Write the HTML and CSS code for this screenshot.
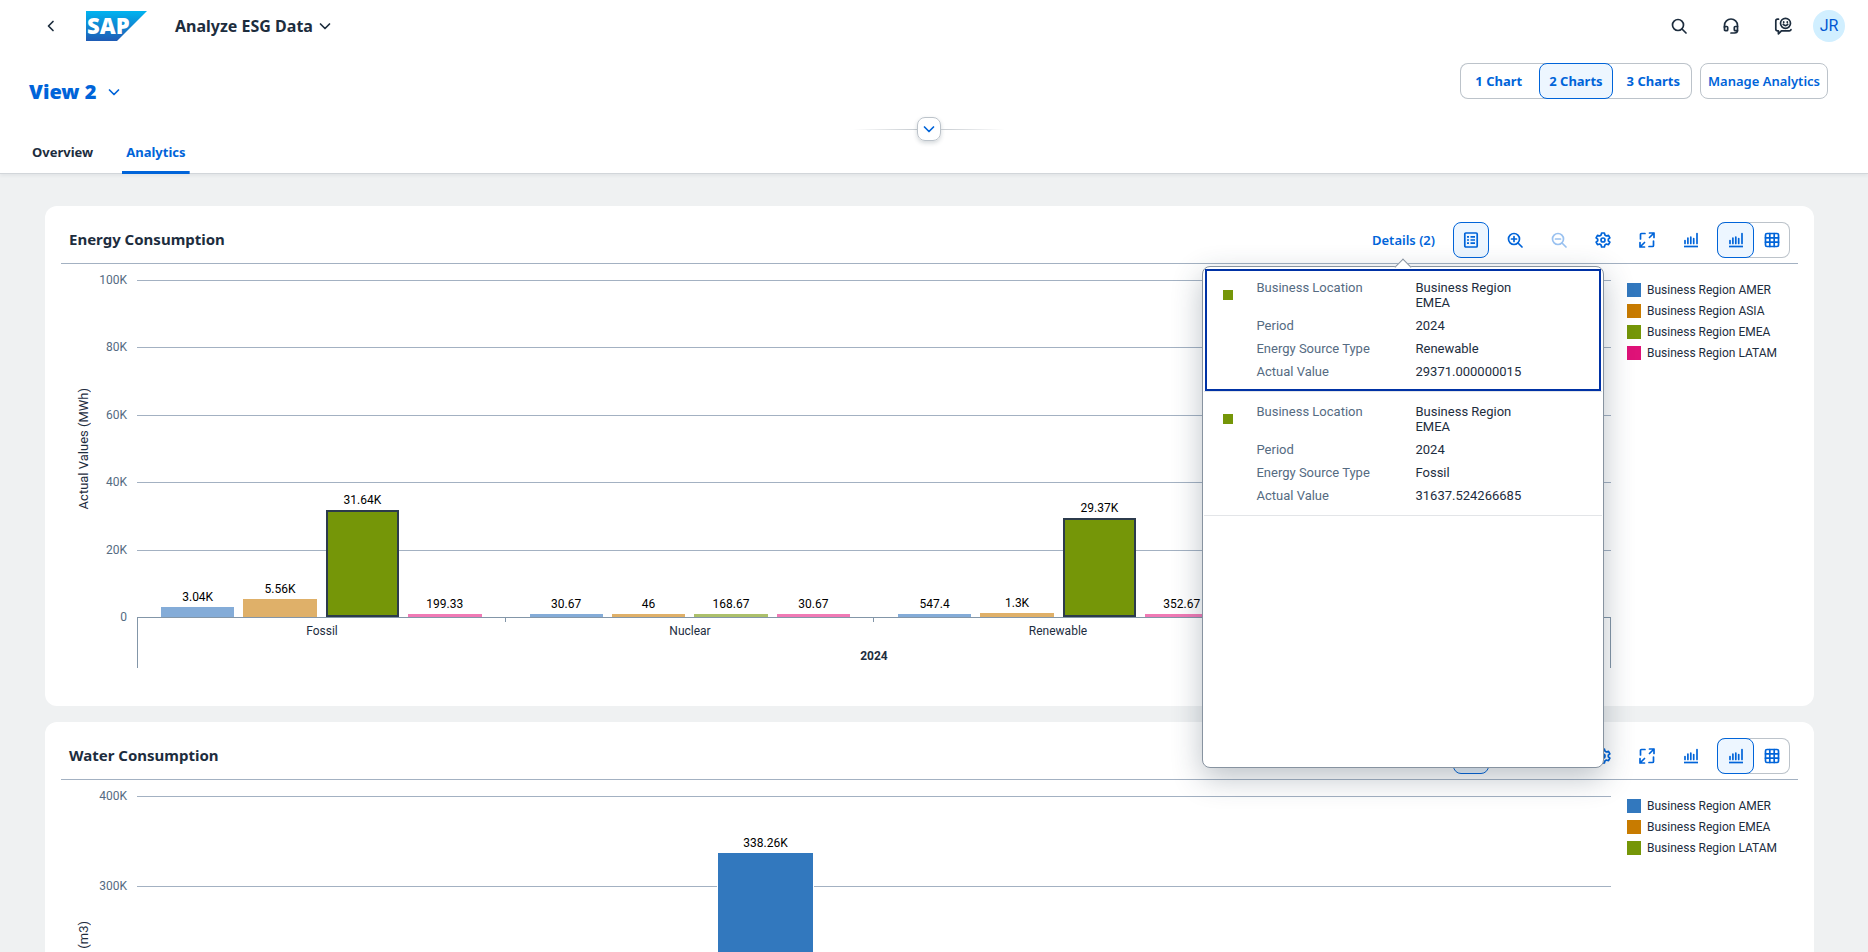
FILE: index.html
```html
<!DOCTYPE html>
<html lang="en">
<head>
<meta charset="utf-8">
<title>Analyze ESG Data</title>
<link rel="stylesheet" href="styles.css">
</head>
<body>
<svg class="sprite" aria-hidden="true">
  <symbol id="i-down" viewBox="0 0 16 16"><path d="M3.5 6l4.5 4.500L12.500 6" /></symbol>
  <symbol id="i-back" viewBox="0 0 16 16"><path d="M10 3.500L5.500 8l4.500 4.500" /></symbol>
  <symbol id="i-search" viewBox="0 0 16 16"><circle cx="7" cy="7" r="5.500"/><path d="M11 11l4 4"/></symbol>
  <symbol id="i-headset" viewBox="0 0 16 16"><path d="M1.500 9.500V7.500a6.500 6.500 0 0 1 13 0v4.500q0 3-3 3H8"/><path d="M1.500 8.500h2.200q1 0 1 1v2.200q0 1-1 1H2.500q-1 0-1-1zM14.500 8.500h-2.200q-1 0-1 1v2.200q0 1 1 1h2.200"/></symbol>
  <symbol id="i-feedback" viewBox="0 0 18 18"><circle cx="11.500" cy="6.300" r="5"/><path d="M9.300 7.400q2.200 2.400 4.400 0M9.700 4.800v.6M13.300 4.800v.6M4.500 2.200H3.500Q1.800 2.200 1.800 4v8q0 1.800 1.800 1.800h.8v3l3-3h8q1.600 0 1.600-1.300"/></symbol>
  <symbol id="i-details" viewBox="0 0 16 16"><rect x="1.800" y="1" width="12.400" height="14" rx="1"/><path class="butt" d="M4 4.800h2M4 8h2M4 11.200h2M7.500 4.800h4.500M7.500 8h4.500M7.500 11.200h4.500"/></symbol>
  <symbol id="i-zoomin" viewBox="0 0 16 16"><circle cx="7" cy="7" r="5.500"/><path d="M11 11l4 4M4.500 7h5M7 4.500v5"/></symbol>
  <symbol id="i-zoomout" viewBox="0 0 16 16"><circle cx="7" cy="7" r="5.500"/><path d="M11 11l4 4M4.500 7h5"/></symbol>
  <symbol id="i-gear" viewBox="0 0 16 16"><path d="M6.600 1h2.800l.5 2.100 1.500.9 2.100-.7 1.400 2.500L13.300 7.200v1.600l1.600 1.400-1.400 2.500-2.100-.7-1.500.9-.5 2.100H6.600l-.5-2.100-1.500-.9-2.100.7-1.400-2.500 1.600-1.400V7.200L1.100 5.800l1.400-2.500 2.100.7 1.500-.9z"/><circle cx="8" cy="8" r="2"/></symbol>
  <symbol id="i-full" viewBox="0 0 16 16"><path d="M6 1.500H2.500Q1.500 1.500 1.500 2.500V7M10 14.500h3.500q1 0 1-1V9M10.500 1H15v4.500M15 1l-4.500 4.500M5.500 15H1v-4.500M1 15l4.500-4.500"/></symbol>
  <symbol id="i-chart" viewBox="0 0 16 16"><path class="butt" d="M1 14.500h14"/><path d="M2 11.500V8.500M4.900 11.500V6M7.800 11.500V5M10.700 11.500V6.500M14 11.500V1.500"/></symbol>
  <symbol id="i-table" viewBox="0 0 16 16"><rect x="1.500" y="1.500" width="13" height="13" rx="1.500"/><path d="M1.500 5.800h13M1.500 10.200h13M5.800 1.500v13M10.200 1.500v13"/></symbol>
</svg>

<header class="shell">
  <button class="icon-btn shell-btn back" aria-label="Back"><svg class="icon"><use href="#i-back"/></svg></button>
  <svg class="logo" viewBox="0 0 61 30" role="img" aria-label="SAP">
    <defs><linearGradient id="sap" x1="0" y1="0" x2="0" y2="1"><stop offset="0" stop-color="#00b4f0"/><stop offset="1" stop-color="#1f5bb5"/></linearGradient></defs>
    <path fill="url(#sap)" d="M0 0h61L31 30H0z"/>
    <text class="logo-text" x="1" y="23">SAP</text>
  </svg>
  <button class="app-title">Analyze ESG Data <svg class="icon"><use href="#i-down"/></svg></button>
  <div class="shell-actions">
    <button class="icon-btn shell-btn" aria-label="Search"><svg class="icon"><use href="#i-search"/></svg></button>
    <button class="icon-btn shell-btn" aria-label="Support"><svg class="icon"><use href="#i-headset"/></svg></button>
    <button class="icon-btn shell-btn" aria-label="Feedback"><svg class="icon wide"><use href="#i-feedback"/></svg></button>
    <button class="avatar" aria-label="Profile JR">JR</button>
  </div>
</header>

<section class="page-head">
  <div class="view-row">
    <button class="view">View 2 <svg class="icon"><use href="#i-down"/></svg></button>
    <div class="view-actions">
      <div class="segmented">
        <button>1 Chart</button><button class="on" aria-pressed="true">2 Charts</button><button>3 Charts</button>
      </div>
      <button class="manage">Manage Analytics</button>
    </div>
  </div>
  <div class="expander"><span class="line"></span><button class="expand" aria-label="Expand header"><svg class="icon"><use href="#i-down"/></svg></button><span class="line end"></span></div>
  <nav class="tabs"><a href="#overview">Overview</a><a class="current" href="#analytics" aria-current="page">Analytics</a></nav>
</section>

<main class="content">
  <article class="card">
    <header class="card-head">
      <h2>Energy Consumption</h2>
      <div class="toolbar">
        <div class="details">
          <button class="details-btn" aria-expanded="true">Details (2)</button>
          <div class="popover" role="dialog" aria-label="Details">
            <ul class="items">
              <li class="item focused"><span class="dot"></span>
                <dl><dt>Business Location</dt><dd>Business Region EMEA</dd><dt>Period</dt><dd>2024</dd><dt>Energy Source Type</dt><dd>Renewable</dd><dt>Actual Value</dt><dd>29371.000000015</dd></dl></li>
              <li class="item"><span class="dot"></span>
                <dl><dt>Business Location</dt><dd>Business Region EMEA</dd><dt>Period</dt><dd>2024</dd><dt>Energy Source Type</dt><dd>Fossil</dd><dt>Actual Value</dt><dd>31637.524266685</dd></dl></li>
            </ul>
          </div>
        </div>
        <button class="icon-btn on" aria-label="Legend"><svg class="icon"><use href="#i-details"/></svg></button>
        <button class="icon-btn" aria-label="Zoom in"><svg class="icon"><use href="#i-zoomin"/></svg></button>
        <button class="icon-btn" aria-label="Zoom out" disabled><svg class="icon"><use href="#i-zoomout"/></svg></button>
        <button class="icon-btn" aria-label="Settings"><svg class="icon"><use href="#i-gear"/></svg></button>
        <button class="icon-btn" aria-label="Full screen"><svg class="icon"><use href="#i-full"/></svg></button>
        <button class="icon-btn" aria-label="Chart type"><svg class="icon"><use href="#i-chart"/></svg></button>
        <div class="segmented icons"><button class="on" aria-label="Chart view"><svg class="icon"><use href="#i-chart"/></svg></button><button aria-label="Table view"><svg class="icon"><use href="#i-table"/></svg></button></div>
      </div>
    </header>
    <div class="chart">
      <div class="axis-title"><span>Actual Values (MWh)</span></div>
      <div class="scale"><span>100K</span><span>80K</span><span>60K</span><span>40K</span><span>20K</span><span>0</span></div>
      <div class="plot">
        <div class="grid"><i></i><i></i><i></i><i></i><i></i></div>
        <div class="groups">
          <div class="group">
            <div class="col"><span>3.04K</span><b class="bar blue" style="height:10px"></b></div>
            <div class="col"><span>5.56K</span><b class="bar orange" style="height:18px"></b></div>
            <div class="col"><span>31.64K</span><b class="bar picked" style="height:107px"></b></div>
            <div class="col"><span>199.33</span><b class="bar pink" style="height:3px"></b></div>
          </div>
          <div class="group">
            <div class="col"><span>30.67</span><b class="bar blue" style="height:3px"></b></div>
            <div class="col"><span>46</span><b class="bar orange" style="height:3px"></b></div>
            <div class="col"><span>168.67</span><b class="bar green" style="height:3px"></b></div>
            <div class="col"><span>30.67</span><b class="bar pink" style="height:3px"></b></div>
          </div>
          <div class="group">
            <div class="col"><span>547.4</span><b class="bar blue" style="height:3px"></b></div>
            <div class="col"><span>1.3K</span><b class="bar orange" style="height:4px"></b></div>
            <div class="col"><span>29.37K</span><b class="bar picked" style="height:99px"></b></div>
            <div class="col"><span>352.67</span><b class="bar pink" style="height:3px"></b></div>
          </div>
          <div class="group"></div>
        </div>
        <div class="categories">
          <div class="names"><span>Fossil</span><span>Nuclear</span><span>Renewable</span><span></span></div>
          <strong>2024</strong>
        </div>
      </div>
      <ul class="legend"><li><i class="c1"></i>Business Region AMER</li><li><i class="c2"></i>Business Region ASIA</li><li><i class="c3"></i>Business Region EMEA</li><li><i class="c4"></i>Business Region LATAM</li></ul>
    </div>
  </article>

  <article class="card">
    <header class="card-head">
      <h2>Water Consumption</h2>
      <div class="toolbar">
        <button class="icon-btn on" aria-label="Legend"><svg class="icon"><use href="#i-details"/></svg></button>
        <button class="icon-btn" aria-label="Zoom in"><svg class="icon"><use href="#i-zoomin"/></svg></button>
        <button class="icon-btn" aria-label="Zoom out" disabled><svg class="icon"><use href="#i-zoomout"/></svg></button>
        <button class="icon-btn" aria-label="Settings"><svg class="icon"><use href="#i-gear"/></svg></button>
        <button class="icon-btn" aria-label="Full screen"><svg class="icon"><use href="#i-full"/></svg></button>
        <button class="icon-btn" aria-label="Chart type"><svg class="icon"><use href="#i-chart"/></svg></button>
        <div class="segmented icons"><button class="on" aria-label="Chart view"><svg class="icon"><use href="#i-chart"/></svg></button><button aria-label="Table view"><svg class="icon"><use href="#i-table"/></svg></button></div>
      </div>
    </header>
    <div class="chart water">
      <div class="axis-title"><span>Actual Values (m3)</span></div>
      <div class="scale"><span>400K</span><span>300K</span><span>200K</span><span>100K</span><span>0</span></div>
      <div class="plot">
        <div class="grid"><i></i><i></i><i></i><i></i></div>
        <div class="groups single">
          <div class="col"><span>338.26K</span><b class="bar solid" style="height:304px"></b></div>
        </div>
      </div>
      <ul class="legend"><li><i class="c1"></i>Business Region AMER</li><li><i class="c2"></i>Business Region EMEA</li><li><i class="c3"></i>Business Region LATAM</li></ul>
    </div>
  </article>
</main>
</body>
</html>
```
FILE: styles.css
```css
* { box-sizing: border-box; }
body {
  margin: 0;
  height: 100vh;
  display: flex;
  flex-direction: column;
  overflow: hidden;
  background: #eff1f2;
  color: #1d2d3e;
  font: 14px/16px Roboto, "Noto Sans", sans-serif;
}
button { font: inherit; color: inherit; background: none; border: 0; padding: 0; cursor: pointer; }
ul, dl, dd, h2 { margin: 0; padding: 0; list-style: none; }
.sprite { position: absolute; width: 0; height: 0; }
.icon { width: 16px; height: 16px; flex: none; fill: none; stroke: currentColor; stroke-width: 1.7; stroke-linejoin: round; stroke-linecap: round; }
.icon.wide { width: 18px; height: 18px; }
.butt { stroke-linecap: butt; }

.shell { display: flex; align-items: center; height: 52px; padding: 0 23px 1px 33px; background: #fff; }
.shell-btn.icon-btn { color: #1d2d3e; }
.logo { width: 61px; height: 30px; margin: 0 28px 0 17px; }
.logo-text { font: 800 22px "Open Sans", sans-serif; fill: #fff; }
.app-title { display: flex; align-items: center; gap: 4px; font: 700 16px/20px "Noto Sans", sans-serif; }
.shell-actions { display: flex; align-items: center; gap: 16px; margin-left: auto; }
.avatar { width: 32px; height: 32px; margin-left: -4px; border-radius: 50%; background: #d1efff; color: #0057d2; font-size: 16px; }

.icon-btn { display: grid; place-items: center; width: 36px; height: 36px; border: 1px solid transparent; border-radius: 8px; color: #0064d9; }
.icon-btn.on { border-color: #0064d9; background: #edf6ff; }
.icon-btn:disabled { color: #99c1f0; }

.page-head { position: relative; z-index: 1; background: #fff; border-bottom: 1px solid #d2d6da; box-shadow: 0 2px 3px rgba(34, 53, 72, .06); }
.view-row { display: flex; justify-content: space-between; padding: 11px 40px 0 29px; color: #0064d9; }
.view { display: flex; align-items: center; gap: 10px; height: 58px; font: 900 20px/24px "Noto Sans", sans-serif; }
.view-actions { display: flex; align-items: flex-start; gap: 8px; font: 600 13px/16px "Noto Sans", sans-serif; }
.segmented { display: flex; height: 36px; border-radius: 8px; box-shadow: inset 0 0 0 1px #bcc3ca; color: #0064d9; font-weight: 700; }
.segmented button { padding: 0 11px 0 13px; border: 1px solid transparent; border-radius: 8px; }
.segmented .on { padding: 0 9px; border-color: #0064d9; background: #edf6ff; }
.segmented button:first-child { padding: 0 16px 0 14px; }
.segmented.icons button { display: grid; place-items: center; width: 36px; padding: 0; }
.segmented.icons .on { width: 37px; }
.manage { width: 128px; height: 36px; border: 1px solid #bcc3ca; border-radius: 8px; }
.expander { display: flex; align-items: center; justify-content: center; height: 24px; margin: -4px 10px 0 0; }
.line { width: 64px; height: 1px; background: linear-gradient(to right, transparent, #c6cbd0); }
.line.end { background: linear-gradient(to left, transparent, #c6cbd0); }
.expand { display: grid; place-items: center; width: 24px; height: 24px; border: 1px solid #bcc3ca; border-radius: 8px; color: #0064d9; box-shadow: 0 2px 4px rgba(34, 53, 72, .2); }
.tabs { display: flex; gap: 25px; padding: 0 28px; height: 33px; margin-bottom: -1px; }
.tabs a { padding: 3px 4px 0; color: #1d2d3e; font: 700 13px/16px "Noto Sans", sans-serif; text-decoration: none; }
.tabs .current { color: #0064d9; background: linear-gradient(#0064d9, #0064d9) bottom / 100% 3px no-repeat; }

.content { flex: 1; min-height: 0; display: flex; flex-direction: column; gap: 16px; padding: 32px 54px 0 45px; overflow: hidden; }
.card { flex: none; min-height: 500px; padding: 8px 16px 38px; border-radius: 12px; background: #fff; }
.card-head { display: flex; align-items: center; justify-content: space-between; height: 50px; padding: 2px 8px 0; border-bottom: 1px solid #a3b1c2; }
.card-head h2 { padding-bottom: 2px; font: 700 15px/20px "Noto Sans", sans-serif; }
.toolbar { display: flex; align-items: center; gap: 8px; }
.details { position: relative; z-index: 5; }
.details-btn { height: 36px; padding: 0 10px; color: #0064d9; font: 600 13px/16px "Noto Sans", sans-serif; }

.popover { position: absolute; top: 44px; left: 50%; width: 402px; height: 502px; transform: translateX(-50%); padding: 1px; border: 1px solid #8793a0; border-radius: 8px; background: #fff; box-shadow: 0 10px 30px rgba(34, 53, 72, .3); }
.popover::before { content: ""; position: absolute; top: -6px; left: 50%; width: 11px; height: 11px; transform: translateX(-50%) rotate(45deg); border: solid #8793a0; border-width: 1px 0 0 1px; background: #fff; }
.items { position: relative; }
.item { display: flex; padding: 12px 18px 12px 19px; border-bottom: 1px solid #e3e5e8; font-size: 13px; line-height: 15px; }
.item.focused { outline: 2px solid #0032a5; outline-offset: -3px; }
.dot { flex: none; width: 10px; height: 10px; margin: 10px 23px 0 0; background: #759608; }
.item dl { display: grid; grid-template-columns: 159px 110px; row-gap: 8px; }
.item dt { color: #556b82; }

.chart { display: flex; padding-top: 16px; font-size: 12px; line-height: 14px; }
.axis-title { width: 46px; height: 337px; display: grid; place-items: center; font-size: 13px; }
.axis-title span { writing-mode: vertical-rl; transform: rotate(180deg); white-space: nowrap; }
.scale { display: flex; flex-direction: column; justify-content: space-between; width: 20px; height: 351px; margin: -7px 10px 0 0; text-align: right; align-items: flex-end; color: #556b82; }
.plot { flex: 1; display: grid; grid-template-rows: 338px auto; }
.grid, .groups { grid-area: 1 / 1; display: flex; }
.grid { flex-direction: column; border-bottom: 1px solid #8396a8; }
.grid i { flex: 1; border-top: 1px solid #a3b1c2; }
.group { flex: 1; display: flex; align-items: flex-end; gap: 9px; padding: 0 24px; }
.col { flex: 1; display: flex; flex-direction: column; align-items: center; justify-content: flex-end; gap: 3px; color: #000; padding-bottom: 1px; }
.bar { width: 100%; }
.blue { background: #84acd8; }
.orange { background: #dfb069; }
.green { background: #acc06b; }
.pink { background: #f07ab5; }
.picked { background: #759608; border: 2px solid #2c3b4b; }
.solid { background: #3278be; box-shadow: 0 0 0 1px #fff; }
.categories { height: 50px; border: solid #8396a8; border-width: 0 1px; text-align: center; color: #1d2d3e; }
.names { display: flex; height: 31px; }
.names span { flex: 1; padding-top: 6px; background: linear-gradient(#8396a8, #8396a8) right top / 1px 4px no-repeat; }
.names span:last-child { background: none; }
.legend { width: 187px; padding-left: 16px; display: grid; gap: 7px; align-content: start; margin: 3px 0 0; }
.legend li { display: flex; gap: 6px; white-space: nowrap; }
.legend i { width: 14px; height: 14px; }
.c1 { background: #3278be; }
.c2 { background: #c87b00; }
.c3 { background: #759608; }
.c4 { background: #df1278; }
.water .axis-title { height: 361px; }
.water .scale { height: 375px; }
.water .plot { grid-template-rows: 362px 25px; }
.single { padding-left: 39.4%; }
.single .col { flex: 0 0 10.7%; }
```
